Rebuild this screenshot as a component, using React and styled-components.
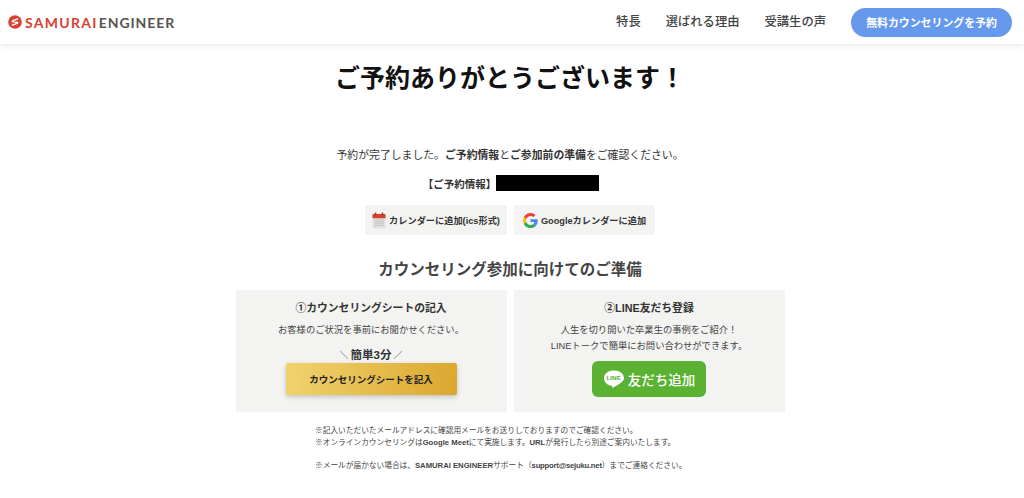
import React from 'react';
import styled, { createGlobalStyle } from 'styled-components';

const GlobalStyle = createGlobalStyle`
  html, body {
    margin: 0;
    padding: 0;
    background: #fff;
    color: #333;
    font-family: "Liberation Sans", "Noto Sans CJK JP", sans-serif;
  }
`;

const Page = styled.div`
  width: 1024px;
  height: 498px;
  overflow: hidden;
`;

const Header = styled.header`
  height: 44px;
  display: flex;
  align-items: center;
  justify-content: space-between;
  padding: 0 12px 0 8px;
  background: #fff;
  box-shadow: 0 1px 7px rgba(0, 0, 0, 0.11);
`;

const Logo = styled.div`
  display: flex;
  align-items: center;
  gap: 3px;
  font-family: "Lato", "Liberation Sans", sans-serif;
  font-size: 14px;
  font-weight: 700;
`;

const LogoRed = styled.span`
  color: #d8412f;
  letter-spacing: 1.3px;
  margin-right: 1px;
`;

const LogoGray = styled.span`
  color: #555;
  letter-spacing: 0.9px;
`;

const Nav = styled.nav`
  display: flex;
  align-items: center;
`;

const NavLink = styled.a`
  font-size: 12.3px;
  font-weight: 500;
  color: #444;
  margin: 0 25px 2px 0;
`;

const CtaButton = styled.a`
  width: 161px;
  height: 29px;
  display: flex;
  align-items: center;
  justify-content: center;
  border-radius: 15px;
  background: #6699ee;
  color: #fff;
  font-size: 10.9px;
  font-weight: 700;
`;

const Main = styled.main`
  display: flex;
  flex-direction: column;
  align-items: center;
  padding-right: 4px;
`;

const Title = styled.h1`
  margin: 15px 0 0;
  height: 38px;
  line-height: 38px;
  font-size: 25px;
  font-weight: 700;
  color: #111;
`;

const Lead = styled.p`
  margin: 49px 0 0;
  height: 18px;
  line-height: 18px;
  font-size: 10.85px;
  color: #333;
`;

const InfoRow = styled.div`
  margin-top: 10px;
  height: 18px;
  padding-left: 2px;
  display: flex;
  align-items: center;
  font-size: 10.5px;
  font-weight: 700;
`;

const Redacted = styled.span`
  width: 103px;
  height: 16px;
  background: #000;
`;

const CalendarRow = styled.div`
  margin-top: 13px;
  display: flex;
  gap: 7px;
`;

const CalendarButton = styled.a`
  width: ${(p) => p.$width}px;
  height: 30px;
  display: flex;
  align-items: center;
  justify-content: center;
  gap: 3px;
  background: #f3f3f2;
  border-radius: 2px;
  font-size: 9.2px;
  font-weight: 700;
  color: #333;
`;

const PrepareTitle = styled.h2`
  margin: 24px 0 0;
  height: 22px;
  line-height: 22px;
  font-size: 15.5px;
  font-weight: 700;
  color: #444;
`;

const Cards = styled.div`
  margin-top: 9px;
  display: flex;
  gap: 7px;
`;

const Card = styled.section`
  width: 271px;
  height: 122px;
  display: flex;
  flex-direction: column;
  align-items: center;
  background: #f3f3f2;
  box-sizing: border-box;
  padding-top: 10px;
`;

const CardTitle = styled.h3`
  margin: 0;
  height: 16px;
  line-height: 16px;
  font-size: 10.8px;
  font-weight: 700;
  color: #333;
`;

const CardText = styled.p`
  margin: 6px 0 0;
  line-height: 16px;
  font-size: 9.3px;
  color: #444;
  text-align: center;
`;

const Catch = styled.div`
  margin-top: 9px;
  height: 16px;
  line-height: 16px;
  display: flex;
  align-items: center;
  gap: 2px;
  font-size: 11.5px;
  font-weight: 700;
  color: #333;
`;

const Slash = styled.span`
  font-size: 9px;
  font-weight: 400;
`;

const GoldButton = styled.a`
  width: 171px;
  height: 32px;
  display: flex;
  align-items: center;
  justify-content: center;
  border-radius: 2px;
  background: linear-gradient(100deg, #f0d36e 0%, #dba72e 100%);
  box-shadow: 0 2px 5px rgba(0, 0, 0, 0.2);
  font-size: 9.5px;
  font-weight: 700;
  color: #222;
`;

const LineButton = styled.a`
  margin-top: 7px;
  width: 114px;
  height: 36px;
  display: flex;
  align-items: center;
  justify-content: center;
  gap: 4px;
  border-radius: 6px;
  background: #5bb131;
  font-size: 13.5px;
  font-weight: 500;
  color: #fff;
`;

const Notes = styled.div`
  margin-top: 13px;
  width: 390px;
  font-size: 7.7px;
  line-height: 11.7px;
  color: #444;
  white-space: nowrap;
`;

const NoteGap = styled.div`
  height: 11.7px;
`;

const MailText = styled.b`
  letter-spacing: -0.22px;
`;

const LogoMark = () => (
  <svg width="14" height="14" viewBox="0 0 14 14">
    <circle cx="7" cy="7" r="6.8" fill="#d8412f" />
    <path d="M10.200 3.600 L5 5.700 Q3.400 6.500 5 6.900 L9 7.100 Q10.600 7.500 9 8.300 L3.800 10.400" stroke="#fff" strokeWidth="1.400" fill="none" />
  </svg>
);

const CalendarIcon = () => (
  <svg width="14" height="17" viewBox="0 0 15 18">
    <rect x="0.5" y="2" width="14" height="15.500" rx="1" fill="#e2e2e2" />
    <path d="M0.5 3 a1 1 0 0 1 1 -1 h12 a1 1 0 0 1 1 1 v3.500 h-14 z" fill="#d8402e" />
    <rect x="3" y="0.500" width="1.600" height="3" fill="#9c2f22" />
    <rect x="10.400" y="0.500" width="1.600" height="3" fill="#9c2f22" />
    <path d="M2.500 8.500h10M2.500 10.500h10M2.500 12.500h10M2.500 14.500h10" stroke="#b4b4b4" strokeWidth="1" strokeDasharray="1.400 .7" />
  </svg>
);

const GoogleIcon = () => (
  <svg width="15" height="15" viewBox="0 0 48 48">
    <path fill="#EA4335" d="M24 9.500c3.500 0 6.700 1.200 9.200 3.600l6.900-6.900C35.900 2.400 30.500 0 24 0 14.600 0 6.500 5.400 2.600 13.200l8 6.200C12.500 13.700 17.800 9.500 24 9.500z" />
    <path fill="#4285F4" d="M47 24.500c0-1.600-.1-3.100-.4-4.500H24v9h12.900c-.6 3-2.200 5.500-4.700 7.200l7.700 6C44.400 37.900 47 31.800 47 24.500z" />
    <path fill="#FBBC05" d="M10.600 28.600c-.5-1.400-.8-3-.8-4.600s.3-3.200.8-4.600l-8-6.200C.9 16.500 0 20.100 0 24s.9 7.500 2.600 10.800l8-6.200z" />
    <path fill="#34A853" d="M24 48c6.500 0 11.900-2.100 15.900-5.800l-7.700-6c-2.200 1.400-4.900 2.300-8.200 2.300-6.200 0-11.500-4.200-13.400-9.900l-8 6.200C6.500 42.600 14.600 48 24 48z" />
  </svg>
);

const LineIcon = () => (
  <svg width="21" height="21" viewBox="0 0 21 21">
    <path d="M10.500 1.500C5.200 1.500 1 4.900 1 9.200c0 3.800 3.300 7 7.800 7.600.6.100.5.500.4 1.300-.1.500.2.800.9.400 2.800-1.500 10.900-5.500 10.900-9.300 0-4.300-4.200-7.700-9.500-7.700z" fill="#fff" />
    <text x="10.500" y="11.400" textAnchor="middle" fontSize="6.200" fontWeight="700" fontFamily="Liberation Sans, sans-serif" fill="#5bb131">LINE</text>
  </svg>
);

export default function App() {
  return (
    <Page>
      <GlobalStyle />
      <Header>
        <Logo>
          <LogoMark />
          <span>
            <LogoRed>SAMURAI</LogoRed>
            <LogoGray>ENGINEER</LogoGray>
          </span>
        </Logo>
        <Nav>
          <NavLink>特長</NavLink>
          <NavLink>選ばれる理由</NavLink>
          <NavLink>受講生の声</NavLink>
          <CtaButton>無料カウンセリングを予約</CtaButton>
        </Nav>
      </Header>
      <Main>
        <Title>ご予約ありがとうございます！</Title>
        <Lead>
          予約が完了しました。<b>ご予約情報</b>と<b>ご参加前の準備</b>をご確認ください。
        </Lead>
        <InfoRow>
          【ご予約情報】<Redacted />
        </InfoRow>
        <CalendarRow>
          <CalendarButton $width={142}>
            <CalendarIcon />
            カレンダーに追加(ics形式)
          </CalendarButton>
          <CalendarButton $width={141}>
            <GoogleIcon />
            Googleカレンダーに追加
          </CalendarButton>
        </CalendarRow>
        <PrepareTitle>カウンセリング参加に向けてのご準備</PrepareTitle>
        <Cards>
          <Card>
            <CardTitle>①カウンセリングシートの記入</CardTitle>
            <CardText>お客様のご状況を事前にお聞かせください。</CardText>
            <Catch>
              <Slash>＼</Slash>簡単3分<Slash>／</Slash>
            </Catch>
            <GoldButton>カウンセリングシートを記入</GoldButton>
          </Card>
          <Card>
            <CardTitle>②LINE友だち登録</CardTitle>
            <CardText>
              人生を切り開いた卒業生の事例をご紹介！
              <br />
              LINEトークで簡単にお問い合わせができます。
            </CardText>
            <LineButton>
              <LineIcon />
              友だち追加
            </LineButton>
          </Card>
        </Cards>
        <Notes>
          ※記入いただいたメールアドレスに確認用メールをお送りしておりますのでご確認ください。
          <br />
          ※オンラインカウンセリングは<b>Google Meet</b>にて実施します。<b>URL</b>が発行したら別途ご案内いたします。
          <NoteGap />
          ※メールが届かない場合は、<b>SAMURAI ENGINEER</b>サポート（<MailText>support@sejuku.net</MailText>）までご連絡ください。
        </Notes>
      </Main>
    </Page>
  );
}
